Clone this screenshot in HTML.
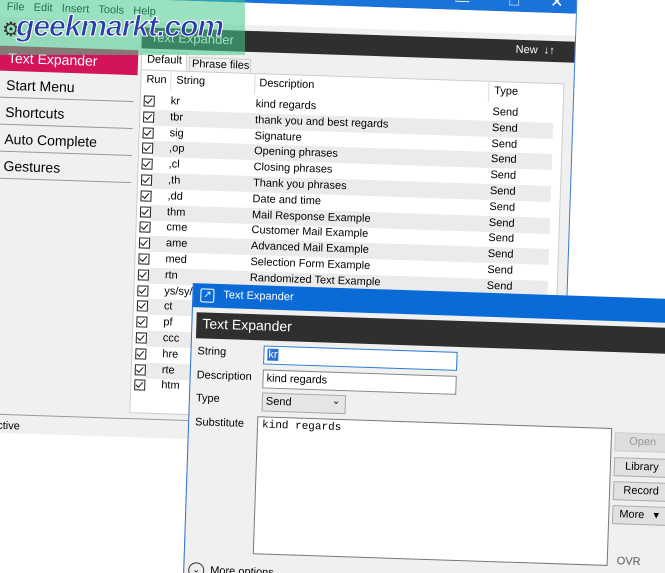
<!DOCTYPE html>
<html><head><meta charset="utf-8"><style>
*{margin:0;padding:0;box-sizing:border-box}
html,body{width:665px;height:573px;overflow:hidden}
body{background:#fff;font-family:"Liberation Sans",sans-serif;position:relative;font-size:11px;color:#000}
.abs{position:absolute}
#main{position:absolute;left:-10px;top:-20px;width:580px;height:462px;background:#f0f0f0;transform-origin:290px 235px;transform:rotate(1.9deg);border-right:1px solid #3a7bd5;overflow:hidden}
#dlg{position:absolute;left:188px;top:291px;width:520px;height:320px;background:#f0f0f0;transform-origin:242px 139px;transform:rotate(1.9deg);border-left:1px solid #2a6fd0}
.row{position:absolute;left:146px;width:414px;height:16px}
.row.g{background:#ebebeb;left:160px;width:400px}
.cb{position:absolute;width:11px;height:11px;border:1px solid #222;background:#fff}
.cb:after{content:"";position:absolute;left:2px;top:0px;width:3px;height:6px;border:solid #111;border-width:0 1.5px 1.5px 0;transform:rotate(40deg)}
.btn{position:absolute;left:426px;width:56px;height:19px;border:1px solid #adadad;background:#e1e1e1;text-align:center;line-height:17px;font-size:11px}
</style></head><body>

<div id="main">
  <div class="abs" style="left:0;top:0;width:580px;height:24px;background:#1a73d9"></div>
  <div class="abs" style="left:458px;top:6px;color:#fff;font-size:14px">&#8212;</div>
  <div class="abs" style="left:512px;top:8px;width:10px;height:10px;border:1px solid #9cc3f0"></div>
  <div class="abs" style="left:553px;top:3px;color:#fff;font-size:16px">&#10005;</div>
  <div class="abs" style="left:0;top:24px;width:580px;height:22px;background:#fff"></div>
  <div class="abs" style="left:10px;top:30px;font-size:11px">File&nbsp;&nbsp;&nbsp;Edit&nbsp;&nbsp;&nbsp;Insert&nbsp;&nbsp;&nbsp;Tools&nbsp;&nbsp;&nbsp;Help</div>
  <div class="abs" style="left:146px;top:52px;width:434px;height:21px;background:#2f2f2f"></div>
  <div class="abs" style="left:155px;top:54px;color:#fff;font-size:13px">Text Expander</div>
  <div class="abs" style="left:520px;top:56px;color:#fff;font-size:11px">New&nbsp;&nbsp;&#8595;&#8593;</div>
  <div class="abs" style="left:0;top:75px;width:143px;height:25px;background:#d4145a"></div>
  <div class="abs" style="left:13px;top:79px;color:#fff;font-size:14px">Text Expander</div>
  <div class="abs" style="left:12px;top:106px;font-size:14px">Start Menu</div>
  <div class="abs" style="left:0;top:126px;width:140px;border-top:1px solid #999"></div>
  <div class="abs" style="left:12px;top:133px;font-size:14px">Shortcuts</div>
  <div class="abs" style="left:0;top:153px;width:140px;border-top:1px solid #999"></div>
  <div class="abs" style="left:12px;top:160px;font-size:14px">Auto Complete</div>
  <div class="abs" style="left:0;top:180px;width:140px;border-top:1px solid #999"></div>
  <div class="abs" style="left:12px;top:187px;font-size:14px">Gestures</div>
  <div class="abs" style="left:0;top:207px;width:140px;border-top:1px solid #999"></div>
  <div class="abs" style="left:146px;top:76px;width:46px;height:18px;background:#fff;border:1px solid #ccc;border-bottom:none"></div>
  <div class="abs" style="left:152px;top:78px">Default</div>
  <div class="abs" style="left:194px;top:80px;width:62px;height:16px;border:1px solid #ccc;border-bottom:none"></div>
  <div class="abs" style="left:197px;top:81px">Phrase files</div>
  <div class="abs" style="left:146px;top:94px;width:424px;height:344px;background:#fff;border:1px solid #ccc"></div>
  <div class="abs" style="left:152px;top:98px">Run</div>
  <div class="abs" style="left:182px;top:98px">String</div>
  <div class="abs" style="left:265px;top:98px">Description</div>
  <div class="abs" style="left:500px;top:98px">Type</div>
  <div class="abs" style="left:176px;top:95px;height:20px;border-left:1px solid #ddd"></div>
  <div class="abs" style="left:260px;top:95px;height:20px;border-left:1px solid #ddd"></div>
  <div class="abs" style="left:494px;top:95px;height:20px;border-left:1px solid #ddd"></div>
  <div id="rows"></div>
  <div class="abs" style="left:0;top:443px;width:580px;border-top:1px solid #999"></div>
  <div class="abs" style="left:7px;top:449px">Active</div>
</div>

<div id="dlg">
  <div class="abs" style="left:0;top:0;width:520px;height:24px;background:#0b6bd6"></div>
  <div class="abs" style="left:7px;top:5px;width:14px;height:14px;border:1.5px solid #fff;border-radius:2px;color:#fff;font-size:10px;line-height:11px;text-align:center">&#8599;</div>
  <div class="abs" style="left:30px;top:5px;color:#fff;font-size:11px">Text Expander</div>
  <div class="abs" style="left:4px;top:29px;width:516px;height:26px;background:#2f2f2f"></div>
  <div class="abs" style="left:10px;top:32px;color:#fff;font-size:14px">Text Expander</div>
  <div class="abs" style="left:6px;top:62px">String</div>
  <div class="abs" style="left:72px;top:60px;width:194px;height:19px;background:#fff;border:1px solid #2b7ad6"></div>
  <div class="abs" style="left:76px;top:63px;background:#2b6fd0;color:#fff;padding:0 1px">kr</div>
  <div class="abs" style="left:6px;top:86px">Description</div>
  <div class="abs" style="left:72px;top:84px;width:194px;height:19px;background:#fff;border:1px solid #888"></div>
  <div class="abs" style="left:76px;top:87px">kind regards</div>
  <div class="abs" style="left:6px;top:109px">Type</div>
  <div class="abs" style="left:72px;top:107px;width:84px;height:19px;background:#e5e5e5;border:1px solid #aaa"></div>
  <div class="abs" style="left:76px;top:110px">Send</div>
  <div class="abs" style="left:142px;top:108px;font-size:10px">&#8964;</div>
  <div class="abs" style="left:6px;top:133px">Substitute</div>
  <div class="abs" style="left:68px;top:131px;width:355px;height:138px;background:#fff;border:1px solid #777"></div>
  <div class="abs" style="left:73px;top:134px;font-family:'Liberation Mono',monospace;font-size:11px">kind regards</div>
  <div class="btn" style="top:135px;color:#999;background:#ddd;border-color:#ccc">Open</div>
  <div class="btn" style="top:160px">Library</div>
  <div class="btn" style="top:184px">Record</div>
  <div class="btn" style="top:208px;text-align:left;padding-left:6px">More&nbsp;&nbsp;&nbsp;&#9662;</div>
  <div class="abs" style="left:432px;top:258px;color:#555">OVR</div>
  <div class="abs" style="left:4px;top:279px;width:16px;height:16px;border:1.5px solid #333;border-radius:50%;font-size:9px;text-align:center;line-height:12px">&#8964;</div>
  <div class="abs" style="left:26px;top:281px">More options</div>
</div>

<div class="abs" style="left:0;top:0;width:245px;height:55px;background:rgba(70,200,140,0.55)"></div>
<div class="abs" style="left:2px;top:17px;font-size:20px;color:#333">&#9881;</div>
<div class="abs" style="left:16px;top:10px;font-size:30px;font-weight:bold;font-style:italic;color:#2a3fa8;letter-spacing:-1px;-webkit-text-stroke:1px #fff">geekmarkt.com</div>

<script>
var d=[["kr","kind regards"],["tbr","thank you and best regards"],["sig","Signature"],[",op","Opening phrases"],[",cl","Closing phrases"],[",th","Thank you phrases"],[",dd","Date and time"],["thm","Mail Response Example"],["cme","Customer Mail Example"],["ame","Advanced Mail Example"],["med","Selection Form Example"],["rtn","Randomized Text Example"],["ys/sy/y",""],["ct",""],["pf",""],["ccc",""],["hre",""],["rte",""],["htm",""]];
var h="";
d.forEach(function(r,i){var y=118+i*15.8;
if(i%2)h+='<div class="row g" style="top:'+y+'px"></div>';
h+='<div class="cb" style="left:150px;top:'+(y+2)+'px"></div>';
h+='<div class="abs" style="left:177px;top:'+(y+1)+'px">'+r[0]+'</div>';
if(r[1])h+='<div class="abs" style="left:262px;top:'+(y+1)+'px">'+r[1]+'</div>';
h+='<div class="abs" style="left:499px;top:'+(y+1)+'px">Send</div>';});
document.getElementById("rows").outerHTML=h;
</script>
</body></html>
